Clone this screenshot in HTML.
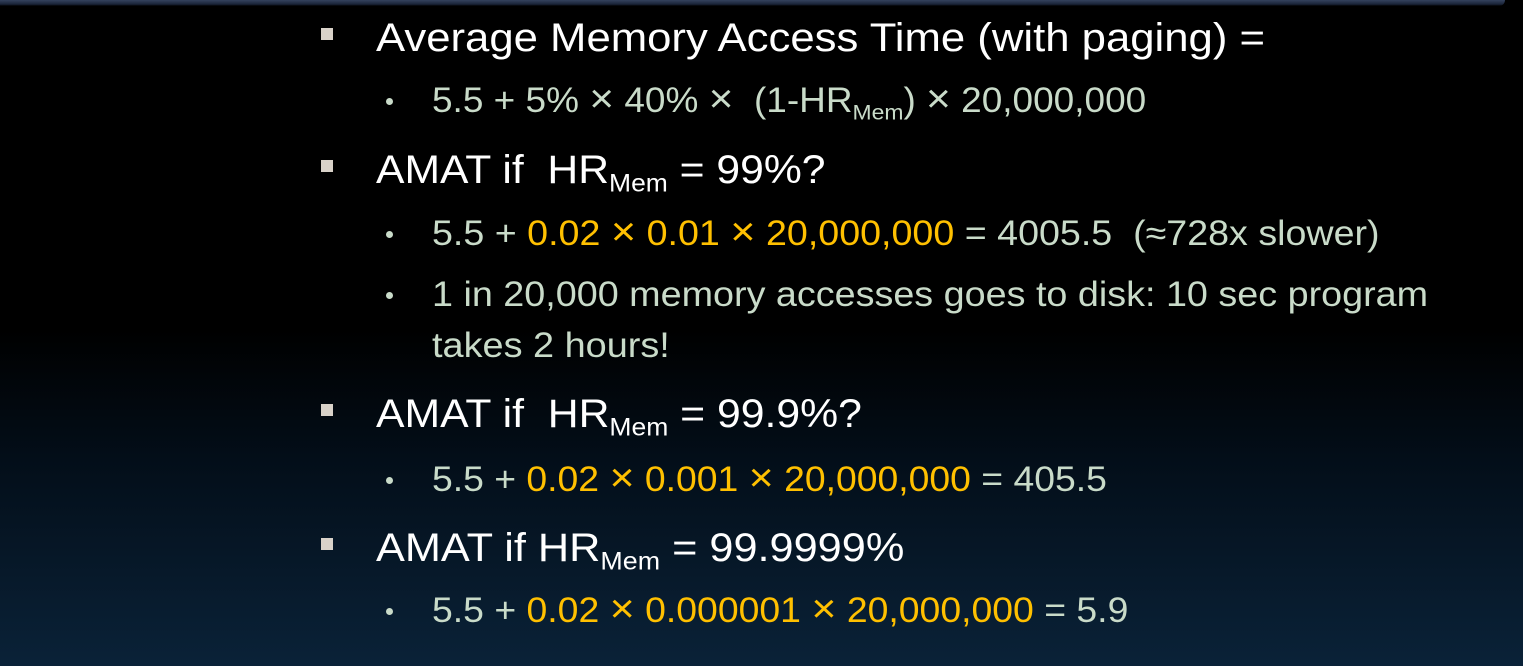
<!DOCTYPE html>
<html><head><meta charset="utf-8"><style>
html,body{margin:0;padding:0}
body{width:1523px;height:666px;overflow:hidden;position:relative;
background:linear-gradient(to bottom,#000 0px,#000 330px,#030e19 460px,#0a2238 666px);
font-family:"Liberation Sans",sans-serif;}
.top{position:absolute;left:0;top:0;width:1505px;height:6px;background:linear-gradient(to bottom,#34425e,#1a2438 70%,#000);border-radius:0 0 6px 0}
.l{position:absolute;white-space:nowrap;transform-origin:0 50%;line-height:44px;height:44px}
.a{left:376px;font-size:40px;color:#fff}
.b{left:432px;font-size:35px;color:#c9dbc9}
.o{color:#ffc000}
.x{font-size:1.15em;line-height:0}
sub{font-size:0.62em;vertical-align:-0.35em;line-height:0}
.sq{position:absolute;left:321px;width:12px;height:12px;background:#d9d2c9}
.dot{position:absolute;left:386px;width:7px;height:7px;border-radius:50%;background:#c9dbc9}
</style></head><body>
<div class="top"></div>
<div class="sq" style="top:28px"></div>
<div class="sq" style="top:160px"></div>
<div class="sq" style="top:404px"></div>
<div class="sq" style="top:538px"></div>
<div class="dot" style="top:98px"></div>
<div class="dot" style="top:231px"></div>
<div class="dot" style="top:292px"></div>
<div class="dot" style="top:477px"></div>
<div class="dot" style="top:608px"></div>

<div class="l a" style="top:16px">Average Memory Access Time (with paging) =</div>
<div class="l b" style="top:79px">5.5 + 5% <span class="x">×</span> 40% <span class="x">×</span>&nbsp; (1-HR<sub>Mem</sub>) <span class="x">×</span> 20,000,000</div>
<div class="l a" style="top:148px">AMAT if&nbsp; HR<sub>Mem</sub> = 99%?</div>
<div class="l b" style="top:212px">5.5 + <span class="o">0.02 <span class="x">×</span> 0.01 <span class="x">×</span> 20,000,000</span> = 4005.5&nbsp; (≈728x slower)</div>
<div class="l b" style="top:273px">1 in 20,000 memory accesses goes to disk: 10 sec program</div>
<div class="l b" style="top:324px">takes 2 hours!</div>
<div class="l a" style="top:392px">AMAT if&nbsp; HR<sub>Mem</sub> = 99.9%?</div>
<div class="l b" style="top:458px">5.5 + <span class="o">0.02 <span class="x">×</span> 0.001 <span class="x">×</span> 20,000,000</span> = 405.5</div>
<div class="l a" style="top:526px">AMAT if HR<sub>Mem</sub> = 99.9999%</div>
<div class="l b" style="top:589px">5.5 + <span class="o">0.02 <span class="x">×</span> 0.000001 <span class="x">×</span> 20,000,000</span> = 5.9</div>
<script>
var w=[889,714,450,948,996,238,486,675,528,696];
var els=document.querySelectorAll('.l');
for(var i=0;i<els.length;i++){var r=els[i].scrollWidth;if(r>0)els[i].style.transform='scaleX('+(w[i]/r)+')';}
</script>
</body></html>
